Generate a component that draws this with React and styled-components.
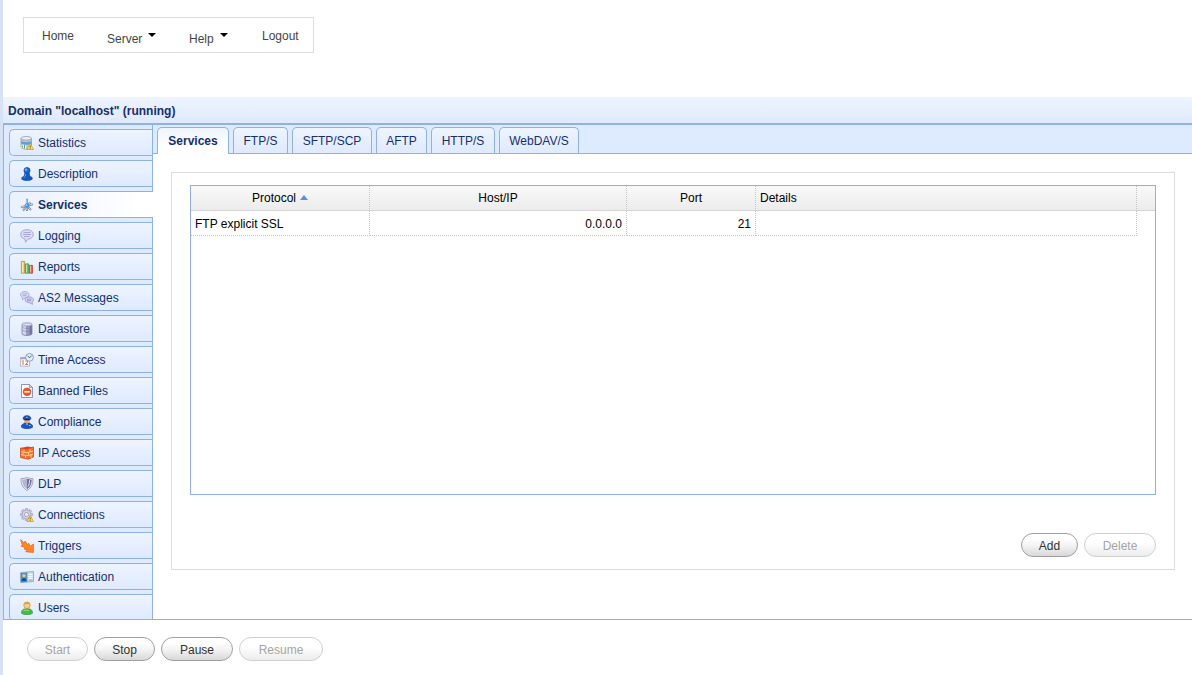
import React, { useState } from "react";
import styled, { createGlobalStyle, css } from "styled-components";

const Global = createGlobalStyle`
  *, *::before, *::after { box-sizing: border-box; }
  body { margin: 0; background: #fff; }
  body, button, table { font: 12px/16px "Liberation Sans", Arial, sans-serif; }
`;

const Page = styled.div`
  display: flex;
  flex-direction: column;
  height: 100vh;
  border-left: 3px solid #d6e3f5;
`;

const MenuBar = styled.nav`
  align-self: flex-start;
  margin: 17px 20px 44px;
  border: 1px solid #ddd;
`;

const MenuList = styled.ul`
  display: flex;
  height: 34px;
  margin: 0;
  padding: 0 0 0 2px;
  list-style: none;
`;

const MenuLink = styled.a`
  display: flex;
  width: ${(p) => p.$width}px;
  height: 34px;
  padding: ${(p) => (p.$drop ? "13px" : "10px")} 0 0 16px;
  color: #444;
  text-decoration: none;
`;

const Caret = styled.span`
  height: 0;
  margin: 2px 0 0 6px;
  border: 4px solid transparent;
  border-top-color: #000;
  border-bottom: 0;
`;

const TitleBar = styled.header`
  flex: none;
  height: 28px;
  padding: 6px 5px 0;
  background: linear-gradient(#eef4ff, #dfeaff);
  border-bottom: 2px solid #8db2e3;
`;

const Title = styled.h1`
  margin: 0;
  color: #15306b;
  font-size: 12px;
  line-height: 16px;
`;

const Panel = styled.div`
  display: flex;
  flex: 1;
  min-height: 0;
  overflow: hidden;
  border-left: 1px solid #8db2e3;
  border-bottom: 1px solid #8db2e3;
`;

const SideNav = styled.ul`
  display: flex;
  flex: none;
  flex-direction: column;
  gap: 4px;
  width: 149px;
  margin: 0;
  padding: 4px 0 0 5px;
  list-style: none;
  background: #deebff;
  border-right: 1px solid #8db2e3;
`;

const SideTab = styled.button`
  display: flex;
  align-items: center;
  gap: 4px;
  width: 100%;
  height: 27px;
  padding: 0 0 0 10px;
  color: #15306b;
  background: linear-gradient(#eef4ff, #dfeaff);
  border: 1px solid #8db2e3;
  border-right: 0;
  border-radius: 5px 0 0 5px;
  ${(p) =>
    p.$active &&
    css`
      width: calc(100% + 1px);
      font-weight: bold;
      background: linear-gradient(90deg, #e9f1ff, #fff 90%);
    `}
`;

const Icon = styled.svg`
  flex: none;
  width: 14px;
  height: 14px;
`;

const Main = styled.main`
  display: flex;
  flex: 1;
  flex-direction: column;
  min-width: 0;
`;

const TabStrip = styled.div`
  display: flex;
  flex: none;
  gap: 4px;
  height: 29px;
  padding: 2px 4px 0;
  background: #deebff;
  border-bottom: 1px solid #8db2e3;
`;

const Tab = styled.button`
  width: ${(p) => p.$width}px;
  height: 26px;
  padding: 0;
  white-space: nowrap;
  color: #15306b;
  background: linear-gradient(#eef4ff, #dfeaff);
  border: 1px solid #8db2e3;
  border-bottom: 0;
  border-radius: 5px 5px 0 0;
  ${(p) =>
    p.$active &&
    css`
      height: 27px;
      font-weight: bold;
      background: linear-gradient(#eef4ff, #fff 70%);
    `}
`;

const Frame = styled.section`
  display: flex;
  flex: 1;
  flex-direction: column;
  margin: 18px 17px 49px 18px;
  padding: 12px 18px;
  border: 1px solid #ddd;
`;

const GridBox = styled.div`
  flex: 1;
  border: 1px solid #8db2e3;
`;

const Grid = styled.table`
  width: 100%;
  table-layout: fixed;
  border-spacing: 0;
  color: #000;
`;

const Column = styled.col`
  width: ${(p) => p.$width};
`;

const HeadCell = styled.th`
  height: 25px;
  padding: 0 4px;
  font-weight: normal;
  text-align: ${(p) => p.$align || "center"};
  background: linear-gradient(#f9f9f9, #ececec);
  border-bottom: 1px solid #d4d4d4;
  border-right: 1px dotted #c5c5c5;
  &:last-child { border-right: 0; }
`;

const Cell = styled.td`
  height: 25px;
  padding: 2px 4px 0;
  text-align: ${(p) => p.$align || "left"};
  border-bottom: 1px dotted #c5c5c5;
  border-right: 1px dotted #c5c5c5;
  &:last-child { border: 0; }
`;

const SortMark = styled.span`
  display: inline-block;
  margin-left: 4px;
  vertical-align: 2px;
  border: 4px solid transparent;
  border-bottom: 5px solid #5b8fd6;
  border-top: 0;
`;

const Actions = styled.div`
  display: flex;
  flex: none;
  justify-content: flex-end;
  gap: 6px;
  padding-top: 38px;
`;

const Footer = styled.footer`
  display: flex;
  flex: none;
  gap: 6px;
  height: 55px;
  padding: 17px 24px 0;
`;

const widths = { small: 57, medium: 61, large: 72, wide: 84 };

const Pill = styled.button`
  width: ${(p) => widths[p.$size]}px;
  height: 24px;
  padding: 1px 0 0;
  color: #333;
  background: linear-gradient(#fff 20%, #f5f5f5 50%, #d8d8d8);
  border: 1px solid #a0a0a0;
  border-radius: 12px;
  &:disabled {
    color: #a5a5a5;
    background: linear-gradient(#fff 40%, #ececec);
    border-color: #d0d0d0;
  }
`;

const bubble = (
  <>
    <path d="M7 .7c3.600 0 6.300 1.900 6.300 4.700S10.800 9.900 8 10.200L5.500 13.300 5 10C2.300 9.400.7 7.700.7 5.400.7 2.600 3.400.7 7 .7z" fill="#dddbf7" stroke="#a09ecb" strokeWidth=".9" />
    <path d="M3.500 3.500h7M3 5.500h8M4 7.500h5.500" stroke="#a19fcf" strokeWidth=".9" />
  </>
);

const warning = (
  <>
    <path d="M10.200 7.500l3.400 6H6.800z" fill="#ffe04a" stroke="#c99a1c" strokeWidth=".7" />
    <path d="M10.200 9.500v2M10.200 12.200v.8" stroke="#6b5518" strokeWidth=".9" />
  </>
);

const gearTeeth = [0, 45, 90, 135, 180, 225, 270, 315];

const icons = {
  Statistics: (
    <>
      <path d="M1 2.200v8.600c0 3.200 10.500 3.200 10.500 0V2.200z" fill="#c0c8d6" stroke="#8a93a4" strokeWidth=".7" />
      <ellipse cx="6.250" cy="2.300" rx="5.200" ry="1.800" fill="#eef1f6" stroke="#8f98a9" strokeWidth=".8" />
      <path d="M1.300 5c1.500 1.400 8.500 1.400 10 0v2.800c-2 1.400-8 1.400-10 0z" fill="#6a9ad8" />
      <path d="M1.500 8.500 6 9.200v3.500l-4.500-1z" fill="#f6f7fa" />
      <path d="M2.500 9.500v2M4.500 9v3.500" stroke="#5aa565" />
      {warning}
    </>
  ),
  Description: (
    <>
      <path d="M5 5.500h4L9.800 9l2.400 1.600v1.700c-2 1.700-8.400 1.700-10.400 0v-1.700L4.200 9z" fill="#125bc0" stroke="#0b4299" strokeWidth=".6" />
      <circle cx="7" cy="3.500" r="3.100" fill="#1d67cf" stroke="#0b4299" strokeWidth=".6" />
      <circle cx="6" cy="2.600" r="1.200" fill="#79b0f4" />
      <path d="M5.800 7 5.200 9.500 3.500 11" stroke="#5d9cec" fill="none" />
    </>
  ),
  Services: (
    <>
      <path d="M7 .8V13M1 9.300l12-3M3 12.500 7 8l3.500-3.500M7 8l4 4" stroke="#858d98" strokeWidth="2.100" />
      <path d="M6.800 1.200v11M1.300 9l11.400-2.900M3.300 12 7 8l3.200-3.500M7 8l3.700 3.700" stroke="#d3d8df" strokeWidth=".9" />
      <circle cx="7" cy="7.700" r="2.400" fill="#3c96e4" />
      <circle cx="6.500" cy="7.200" r=".9" fill="#9bd5ff" />
    </>
  ),
  Logging: bubble,
  Reports: (
    <>
      <path d="M1.400 1.400h3.200v11.800H1.400z" fill="#f4d566" stroke="#b08f38" strokeWidth=".8" />
      <path d="M5.400 3.900h3.200v9.300H5.400z" fill="#62d062" stroke="#3b9440" strokeWidth=".8" />
      <path d="M9.400 5.400h3.200v7.800H9.400z" fill="#ef6157" stroke="#b14138" strokeWidth=".8" />
      <path d="M2.500 2v10.500M6.500 4.500v8M10.500 6v6.500" stroke="#fff" opacity=".5" />
    </>
  ),
  "AS2 Messages": (
    <>
      <path d="M4.800.6c2.400 0 4.200 1.300 4.200 3.100S7 6.900 4.700 6.900L2.500 8.800l-.2-2.500C1.200 5.700.6 4.800.6 3.700.6 1.900 2.400.6 4.800.6z" fill="#dddbf7" stroke="#a09ecb" strokeWidth=".8" />
      <path d="M2.500 3H7M2.500 4.700h4" stroke="#a19fcf" strokeWidth=".8" />
      <path d="M9.300 5.900c2.400 0 4.200 1.200 4.200 2.900 0 1-.6 1.900-1.500 2.400l.5 2.200-2.700-1.600c-2.700.2-4.700-1.200-4.700-3s1.800-2.900 4.200-2.900z" fill="#d5d3f2" stroke="#9694c4" strokeWidth=".8" />
      <path d="M7 8.200h4.500M7 9.800h4" stroke="#908ec2" strokeWidth=".8" />
    </>
  ),
  Datastore: (
    <>
      <path d="M2 2.300v9.500c0 2.200 10 2.200 10 0V2.300z" fill="#9b9bc0" stroke="#74749c" strokeWidth=".7" />
      <path d="M2.500 3 6 3.500v9.500l-3.500-1z" fill="#d8d8ea" />
      <path d="M9.800 3.500 11.600 3v9l-1.800.8z" fill="#6c6c98" />
      <ellipse cx="7" cy="2.400" rx="5" ry="1.600" fill="#dcdcec" stroke="#8989aa" strokeWidth=".7" />
      <path d="M2.300 5.500c2 1.200 7.400 1.200 9.400 0M2.300 8.500c2 1.200 7.400 1.200 9.400 0" stroke="#7a7aa2" strokeWidth=".6" fill="none" />
    </>
  ),
  "Time Access": (
    <>
      <path d="M.6 4.500h9v8.700h-9z" fill="#fff" stroke="#a4a4bd" strokeWidth=".8" />
      <path d="M.6 4.500h6v1.800h-6z" fill="#9ba5c3" />
      <path d="M2 8.500l1-1V12M5.300 8h2.200v1.700L5.500 11.500H8" stroke="#ee6037" fill="none" />
      <circle cx="9.500" cy="4.400" r="3.900" fill="#e3eff5" stroke="#8398ac" strokeWidth=".9" />
      <path d="M7.700 2.800l1.800 2L11.700 2.500" stroke="#3c5268" strokeWidth=".9" fill="none" />
    </>
  ),
  "Banned Files": (
    <>
      <path d="M1.500.5h8l3 3v10h-11z" fill="#fff" stroke="#858aa8" strokeWidth=".9" />
      <path d="M9.500.5v3h3z" fill="#cfd3e4" stroke="#858aa8" strokeWidth=".7" />
      <circle cx="7" cy="7.800" r="3.900" fill="#f25429" stroke="#d64019" strokeWidth=".5" />
      <path d="M4.300 7.800h5.400" stroke="#fff" strokeWidth="1.500" />
    </>
  ),
  Compliance: (
    <>
      <path d="M1.500 12.300v-2L4.500 8h5l3 2.300v2c-2 1.800-9 1.800-11 0z" fill="#1558c4" stroke="#0a3c96" strokeWidth=".6" />
      <circle cx="7" cy="5.500" r="2.700" fill="#e9a56c" />
      <path d="M3 3.300C3.500-.3 10.500-.3 11 3.300L10 5H4z" fill="#1d56b0" stroke="#0b3579" strokeWidth=".5" />
      <path d="M4.500 4.500h5" stroke="#09224e" strokeWidth=".9" />
      <path d="M6.300 2.300h1.400" stroke="#f4d24b" />
      <path d="M6 8.500 7 10.500l1-2z" fill="#cfe0fa" />
      <path d="M9 10.500h1.500" stroke="#f4c64b" />
    </>
  ),
  "IP Access": (
    <>
      <path d="M.5 2 6 3l7.500-2v10L8 13.200.5 11.500z" fill="#f4702c" stroke="#cf4a1c" strokeWidth=".8" />
      <path d="M1 5.700 7 6.700l6-1.500M1 8.700l6 1 6-1.500" stroke="#ffdc9c" strokeWidth=".9" fill="none" />
      <path d="M4 3.800v2M3 6.500v2M5.500 9.800v2M10 3.200v2M8.500 6.700v2M11 9v2.500" stroke="#ffdc9c" strokeWidth=".9" />
      <path d="M.5 2 6 3.500 13.500 1.500 7.500.5z" fill="#e8411f" />
    </>
  ),
  DLP: (
    <>
      <path d="M1 1.700C4 1.700 5 1 7 .7c2 .3 3 1 6 1 0 5.500-1.700 9.300-6 11.800C2.700 11 1 7.200 1 1.700z" fill="#f0f0f7" stroke="#8c8cab" strokeWidth=".8" />
      <path d="M2.200 2.700C4.500 2.700 5.500 2 7 1.800v10.400C3.700 10 2.400 7 2.200 2.700z" fill="#b5b5d0" />
      <path d="M7 1.800c1.500.2 2.500.9 4.800.9-.2 4.300-1.500 7.300-4.800 9.500z" fill="#70709c" />
      <path d="M9.600 3.200c-.1 3-.7 5-1.700 6.500" stroke="#e4e4f0" fill="none" />
    </>
  ),
  Connections: (
    <>
      {gearTeeth.map((angle) => (
        <path key={angle} d="M5.300.4h2.400l.3 3H5z" fill="#c6c6da" stroke="#9292b0" strokeWidth=".5" transform={`rotate(${angle} 6.500 6.500)`} />
      ))}
      <circle cx="6.500" cy="6.500" r="4.400" fill="#d2d2e3" stroke="#9a9ab6" strokeWidth=".6" />
      <circle cx="6.500" cy="6.500" r="2" fill="#eef4ff" stroke="#8a8aaa" strokeWidth=".7" />
      {warning}
    </>
  ),
  Triggers: (
    <path d="M.6.6 4.300 4l.8-2L7.300 5.500l1.400-1.300 1.600 3L13.600 5l-.3 8.500-7.800-.8 2-1.700-3.300-.8.900-1.700L1.200 7.200l1-1.500z" fill="#ff8a24" stroke="#ea5a1c" strokeWidth=".7" />
  ),
  Authentication: (
    <>
      <path d="M.5 2.600 13.500 1.500v10L.5 12.600z" fill="#c9def2" stroke="#7fa3c9" strokeWidth=".8" />
      <path d="M1 3 7.300 2.500V12L1 12.300z" fill="#3f92de" />
      <circle cx="4" cy="5.700" r="1.800" fill="#f3c468" />
      <path d="M1.800 11V9.200L4 7.700l2.200 1.500V11z" fill="#174c8f" />
      <path d="M8.500 4.500h4M8.500 6.500h4M8.500 8.500h4" stroke="#fff" />
      <path d="M9 10h3.500" stroke="#7d9bb8" strokeWidth=".8" />
    </>
  ),
  Users: (
    <>
      <path d="M1.500 12.300C1.500 9 3 7.700 7 7.700s5.500 1.300 5.500 4.600c-1.500 1.600-9.500 1.600-11 0z" fill="#42be40" stroke="#2c9430" strokeWidth=".7" />
      <path d="M3.500 9.700c1.500-.8 4-.8 5.500 0" stroke="#9be68a" fill="none" />
      <circle cx="7" cy="4.300" r="3.200" fill="#f8cb90" stroke="#c58a3c" strokeWidth=".7" />
      <path d="M3.700 4.200C3.200-.3 10.800-.3 10.300 4.200L9 2.900 5 3z" fill="#dca336" />
    </>
  ),
};

const menu = [
  { label: "Home", width: 65 },
  { label: "Server", width: 82, drop: true },
  { label: "Help", width: 73, drop: true },
  { label: "Logout", width: 67 },
];

const tabs = [
  { name: "Services", width: 72 },
  { name: "FTP/S", width: 55 },
  { name: "SFTP/SCP", width: 80 },
  { name: "AFTP", width: 51 },
  { name: "HTTP/S", width: 64 },
  { name: "WebDAV/S", width: 80 },
];

const services = [{ protocol: "FTP explicit SSL", host: "0.0.0.0", port: 21, details: "" }];

export default function App() {
  const [section, setSection] = useState("Services");
  const [tab, setTab] = useState("Services");

  return (
    <Page>
      <Global />
      <MenuBar>
        <MenuList>
          {menu.map(({ label, width, drop }) => (
            <li key={label}>
              <MenuLink href="#" $width={width} $drop={drop}>
                {label}
                {drop && <Caret />}
              </MenuLink>
            </li>
          ))}
        </MenuList>
      </MenuBar>
      <TitleBar>
        <Title>Domain "localhost" (running)</Title>
      </TitleBar>
      <Panel>
        <SideNav>
          {Object.keys(icons).map((name) => (
            <li key={name}>
              <SideTab type="button" $active={name === section} onClick={() => setSection(name)}>
                <Icon viewBox="0 0 14 14" fill="none" aria-hidden="true">{icons[name]}</Icon>
                {name}
              </SideTab>
            </li>
          ))}
        </SideNav>
        <Main>
          <TabStrip role="tablist">
            {tabs.map(({ name, width }) => (
              <Tab key={name} type="button" role="tab" aria-selected={name === tab} $width={width} $active={name === tab} onClick={() => setTab(name)}>
                {name}
              </Tab>
            ))}
          </TabStrip>
          <Frame>
            <GridBox>
              <Grid>
                <colgroup>
                  <Column $width="179px" />
                  <Column $width="257px" />
                  <Column $width="129px" />
                  <Column $width="auto" />
                  <Column $width="18px" />
                </colgroup>
                <thead>
                  <tr>
                    <HeadCell>Protocol<SortMark /></HeadCell>
                    <HeadCell>Host/IP</HeadCell>
                    <HeadCell>Port</HeadCell>
                    <HeadCell $align="left">Details</HeadCell>
                    <HeadCell />
                  </tr>
                </thead>
                <tbody>
                  {services.map((s) => (
                    <tr key={s.protocol}>
                      <Cell>{s.protocol}</Cell>
                      <Cell $align="right">{s.host}</Cell>
                      <Cell $align="right">{s.port}</Cell>
                      <Cell>{s.details}</Cell>
                      <Cell />
                    </tr>
                  ))}
                </tbody>
              </Grid>
            </GridBox>
            <Actions>
              <Pill type="button" $size="small">Add</Pill>
              <Pill type="button" $size="large" disabled>Delete</Pill>
            </Actions>
          </Frame>
        </Main>
      </Panel>
      <Footer>
        <Pill type="button" $size="medium" disabled>Start</Pill>
        <Pill type="button" $size="medium">Stop</Pill>
        <Pill type="button" $size="large">Pause</Pill>
        <Pill type="button" $size="wide" disabled>Resume</Pill>
      </Footer>
    </Page>
  );
}
